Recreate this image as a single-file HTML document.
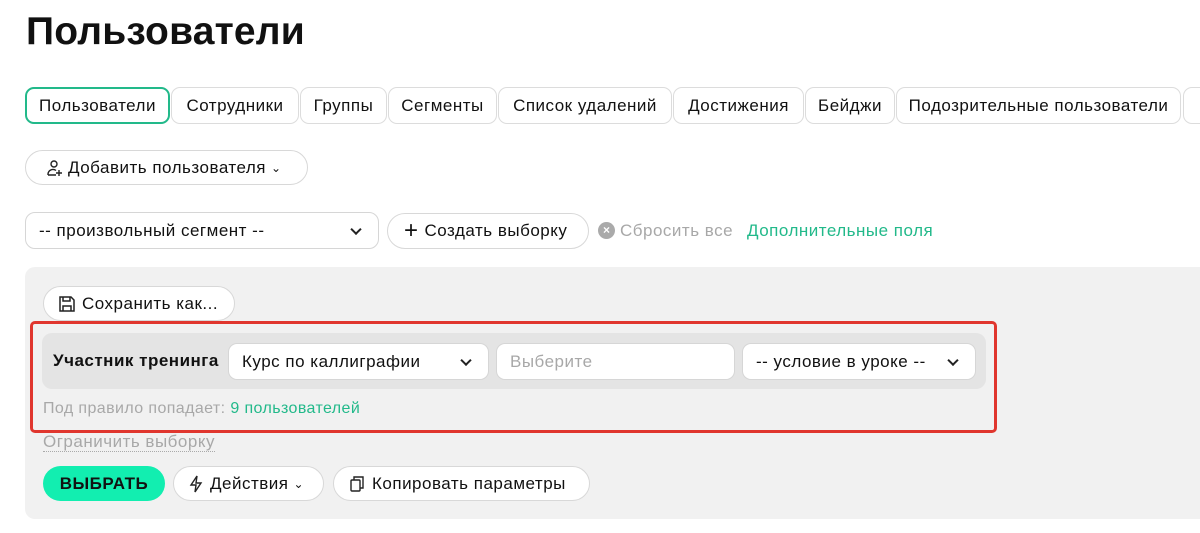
<!DOCTYPE html>
<html><head><meta charset="utf-8"><style>
*{box-sizing:border-box;margin:0;padding:0}
body{width:1200px;height:533px;overflow:hidden;background:#fff;font-family:"Liberation Sans",sans-serif;color:#111;position:relative;letter-spacing:0.5px}
.a{position:absolute}
.tab{position:absolute;top:87px;height:37px;border:1px solid #dcdcdc;border-radius:9px;font-size:17px;display:flex;align-items:center;justify-content:center;white-space:nowrap;background:#fff}
.btn{position:absolute;border:1px solid #d8d8d8;border-radius:18px;background:#fff;font-size:17px;display:flex;align-items:center;white-space:nowrap}
.sel{position:absolute;border:1px solid #d6d6d6;border-radius:9px;background:#fff;font-size:17px;display:flex;align-items:center;white-space:nowrap}
.chev{position:absolute;right:14px;top:50%;width:8px;height:8px;border-right:2px solid #222;border-bottom:2px solid #222;transform:translateY(-70%) rotate(45deg)}
</style></head><body>
<div class="a" style="left:26px;top:10px;font-size:39px;font-weight:bold;letter-spacing:0.2px">Пользователи</div>

<div class="tab" style="left:25px;width:145px;border:2px solid #22b98a">Пользователи</div>
<div class="tab" style="left:171px;width:128px">Сотрудники</div>
<div class="tab" style="left:300px;width:87px">Группы</div>
<div class="tab" style="left:388px;width:109px">Сегменты</div>
<div class="tab" style="left:498px;width:174px">Список удалений</div>
<div class="tab" style="left:673px;width:131px">Достижения</div>
<div class="tab" style="left:805px;width:90px">Бейджи</div>
<div class="tab" style="left:896px;width:285px">Подозрительные пользователи</div>
<div class="tab" style="left:1183px;width:40px"></div>

<div class="btn" style="left:25px;top:150px;width:283px;height:35px;padding-left:20px">
<svg width="18" height="18" viewBox="0 0 18 18" fill="none" stroke="#222" stroke-width="1.4" style="margin-right:4px"><circle cx="8" cy="5" r="3"/><path d="M2 16v-1a5 5 0 0 1 8-3.5M2 16h8M13 11v6M10 14h6"/></svg>
Добавить пользователя<span style="font-size:12px;margin-left:5px">&#8964;</span></div>

<div class="sel" style="left:25px;top:212px;width:354px;height:37px;padding-left:13px;border-radius:10px">-- произвольный сегмент --<span class="chev" style="right:18px"></span></div>
<div class="btn" style="left:387px;top:213px;width:202px;height:36px;padding-left:16px"><span style="font-size:24px;font-weight:300;margin-right:6px;line-height:1">+</span>Создать выборку</div>
<div class="a" style="left:598px;top:222px;width:17px;height:17px;border-radius:50%;background:#aaa;color:#fff;font-size:12px;text-align:center;line-height:17px;font-weight:bold;letter-spacing:0">×</div>
<div class="a" style="left:620px;top:221px;font-size:17px;color:#a8a8a8">Сбросить все</div>
<div class="a" style="left:747px;top:221px;font-size:17px;color:#22b98a">Дополнительные поля</div>

<div class="a" style="left:25px;top:267px;width:1190px;height:252px;background:#f1f1f1;border-radius:10px"></div>
<div class="btn" style="left:43px;top:286px;width:192px;height:35px;padding-left:14px">
<svg width="18" height="18" viewBox="0 0 18 18" fill="none" stroke="#222" stroke-width="1.5" style="margin-right:6px"><path d="M2 2h11l3 3v11H2z"/><path d="M5 2v4h7V2M5 16v-5h8v5"/></svg>Сохранить как...</div>

<div class="a" style="left:30px;top:321px;width:967px;height:112px;border:3px solid #e0362e;border-radius:5px"></div>
<div class="a" style="left:42px;top:333px;width:944px;height:56px;background:#e4e4e4;border-radius:10px"></div>
<div class="a" style="left:53px;top:351px;font-size:17px;font-weight:bold;letter-spacing:0.5px">Участник тренинга</div>
<div class="sel" style="left:228px;top:343px;width:261px;height:37px;padding-left:13px">Курс по каллиграфии<span class="chev" style="right:18px"></span></div>
<div class="sel" style="left:496px;top:343px;width:239px;height:37px;padding-left:13px;color:#a8a8a8">Выберите</div>
<div class="sel" style="left:742px;top:343px;width:234px;height:37px;padding-left:13px">-- условие в уроке --<span class="chev" style="right:18px"></span></div>
<div class="a" style="left:43px;top:400px;font-size:16px;color:#a8a8a8;letter-spacing:0.4px">Под правило попадает: <span style="color:#22b98a">9 пользователей</span></div>
<div class="a" style="left:43px;top:432px;font-size:17px;color:#a8a8a8;border-bottom:1px dotted #aaa;line-height:19px">Ограничить выборку</div>

<div class="a" style="left:43px;top:466px;width:122px;height:35px;border-radius:18px;background:#12eeb0;font-size:17px;font-weight:bold;display:flex;align-items:center;justify-content:center;letter-spacing:0.5px">ВЫБРАТЬ</div>
<div class="btn" style="left:173px;top:466px;width:151px;height:35px;padding-left:14px">
<svg width="16" height="18" viewBox="0 0 16 18" fill="none" stroke="#222" stroke-width="1.4" style="margin-right:6px"><path d="M9 1L3 10h5l-1 7 6-9H8z"/></svg>Действия<span style="font-size:12px;margin-left:5px">&#8964;</span></div>
<div class="btn" style="left:333px;top:466px;width:257px;height:35px;padding-left:14px">
<svg width="18" height="18" viewBox="0 0 18 18" fill="none" stroke="#222" stroke-width="1.4" style="margin-right:6px"><rect x="3" y="5" width="9" height="11" rx="1"/><path d="M6 5V2h9v11h-3"/></svg>Копировать параметры</div>
</body></html>
